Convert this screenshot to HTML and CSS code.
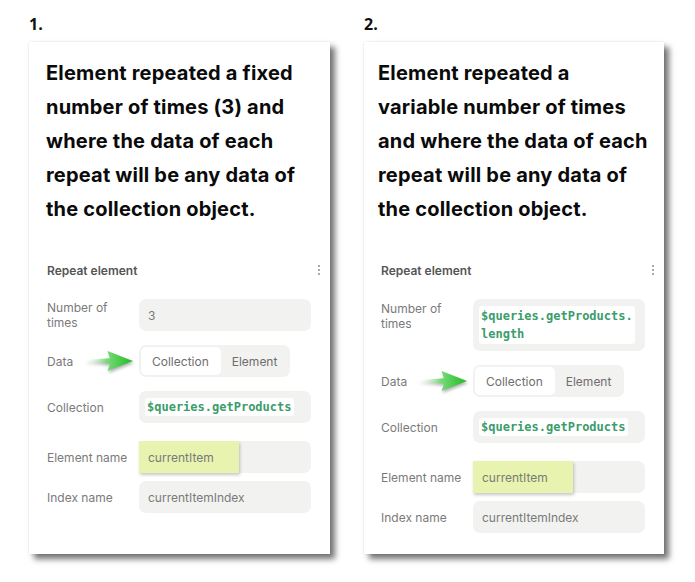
FILE: index.html
```html
<!DOCTYPE html>
<html>
<head>
<meta charset="utf-8">
<link rel="stylesheet" href="styles.css">
</head>
<body>
<div class="page">
  <section class="col">
    <div class="num">1.</div>
    <div class="card">
      <p class="heading">Element repeated a fixed<br>number of times (3) and<br>where the data of each<br>repeat will be any data of<br>the collection object.</p>
      <div class="panel">
        <div class="panel-head"><span>Repeat element</span><span class="kebab"><i></i><i></i><i></i></span></div>
        <div class="row"><div class="label">Number of<br>times</div><div class="field">3</div></div>
        <div class="row"><div class="label">Data<svg class="arrow" viewBox="0 0 50 22" width="50" height="22"><defs><linearGradient id="g1" x1="0" x2="1" y1="0" y2="0"><stop offset="0" stop-color="#ffffff" stop-opacity="0.2"/><stop offset="0.45" stop-color="#7ad97a"/><stop offset="1" stop-color="#1ebd1e"/></linearGradient></defs><path d="M0 10 L25 8.2 L22.5 1 L48 11 L22.5 21 L25 13.8 L0 12 Z" fill="url(#g1)"/></svg></div>
          <div class="toggle"><span class="seg on">Collection</span><span class="seg">Element</span></div></div>
        <div class="row"><div class="label">Collection</div><div class="field"><code class="chip">$queries.getProducts</code></div></div>
        <div class="row gap-lg"><div class="label">Element name</div><div class="field hl-wrap"><span class="hl">currentItem</span></div></div>
        <div class="row gap-sm"><div class="label">Index name</div><div class="field">currentItemIndex</div></div>
      </div>
    </div>
  </section>
  <section class="col">
    <div class="num">2.</div>
    <div class="card alt">
      <p class="heading">Element repeated a<br>variable number of times<br>and where the data of each<br>repeat will be any data of<br>the collection object.</p>
      <div class="panel">
        <div class="panel-head"><span>Repeat element</span><span class="kebab"><i></i><i></i><i></i></span></div>
        <div class="row"><div class="label top">Number of<br>times</div><div class="field tall"><code class="chip">$queries.getProducts.<br>length</code></div></div>
        <div class="row"><div class="label">Data<svg class="arrow" viewBox="0 0 50 22" width="50" height="22"><defs><linearGradient id="g2" x1="0" x2="1" y1="0" y2="0"><stop offset="0" stop-color="#ffffff" stop-opacity="0.2"/><stop offset="0.45" stop-color="#7ad97a"/><stop offset="1" stop-color="#1ebd1e"/></linearGradient></defs><path d="M0 10 L25 8.2 L22.5 1 L48 11 L22.5 21 L25 13.8 L0 12 Z" fill="url(#g2)"/></svg></div>
          <div class="toggle"><span class="seg on">Collection</span><span class="seg">Element</span></div></div>
        <div class="row"><div class="label">Collection</div><div class="field"><code class="chip">$queries.getProducts</code></div></div>
        <div class="row gap-lg"><div class="label">Element name</div><div class="field hl-wrap"><span class="hl">currentItem</span></div></div>
        <div class="row gap-sm"><div class="label">Index name</div><div class="field">currentItemIndex</div></div>
      </div>
    </div>
  </section>
</div>
</body>
</html>
```
FILE: styles.css
```css
html, body {
  margin: 0;
  background: #ffffff;
}
body {
  font-family: Inter, "Liberation Sans", sans-serif;
  color: #222;
  min-height: 582px;
}
.page {
  display: flex;
  align-items: flex-start;
  gap: 34px;
  padding: 0 0 28px 29px;
}
.col {
  display: flex;
  flex-direction: column;
  align-items: flex-start;
  flex: none;
}
.num {
  font: 700 16px/22px "Open Sans", sans-serif;
  color: #111;
  margin: 13px 0 7px;
}
.card {
  width: 301px;
  box-sizing: border-box;
  background: #fff;
  padding: 14px 19px 41px 18px;
  box-shadow: 5px 5px 6px rgba(0, 0, 0, 0.55), 0 0 2px rgba(0, 0, 0, 0.12);
}
.card.alt {
  width: 300px;
  padding-left: 17px;
  padding-bottom: 21px;
}
.heading {
  margin: 0 0 0 -1px;
  font: 700 20px/34px Inter, sans-serif;
  color: #0a0a0a;
  white-space: nowrap;
  letter-spacing: 0.2px;
}
.card.alt .heading {
  margin-left: -3px;
}
.panel {
  margin-top: 36px;
  display: flex;
  flex-direction: column;
}
.panel-head {
  display: flex;
  justify-content: space-between;
  align-items: center;
  height: 16px;
  margin-right: -9px;
  font-size: 12px;
  font-weight: 600;
  color: #555;
  margin-bottom: 21px;
}
.kebab {
  display: flex;
  flex-direction: column;
  gap: 2px;
  width: 2px;
}
.kebab i {
  display: block;
  width: 2px;
  height: 2px;
  background: #aaa;
}
.row {
  display: flex;
  align-items: center;
  margin-top: 14px;
}
.panel-head + .row {
  margin-top: 0;
}
.row.gap-lg { margin-top: 18px; }
.row.gap-sm { margin-top: 8px; }
.label {
  position: relative;
  width: 92px;
  flex: none;
  font-size: 12px;
  line-height: 15px;
  color: #7a7a7a;
}
.label.top {
  align-self: flex-start;
  margin-top: 2px;
}
.arrow {
  position: absolute;
  left: 38px;
  top: -4px;
  filter: drop-shadow(1px 2px 1.5px rgba(0, 0, 0, 0.3));
}
.field {
  width: 172px;
  height: 32px;
  box-sizing: border-box;
  border-radius: 7px;
  background: #f2f2f0;
  padding: 0 9px;
  display: flex;
  align-items: center;
  font-size: 12px;
  color: #7a7a7a;
}
.field.tall {
  height: 52px;
  padding: 0 6px;
}
.chip {
  background: #fff;
  border-radius: 3px;
  padding: 0 2px;
  margin-left: -3px;
  font: 700 12px/18px "DejaVu Sans Mono", monospace;
  color: #3b9c6c;
  white-space: nowrap;
}
.field.tall .chip {
  margin-left: 0;
  padding: 1px 2px;
}
.hl-wrap {
  padding: 0;
}
.hl {
  display: flex;
  align-items: center;
  height: 32px;
  width: 100px;
  box-sizing: border-box;
  padding-left: 9px;
  background: #e7f3ae;
  box-shadow: 1px 2px 3px rgba(0, 0, 0, 0.22);
}
.toggle {
  display: flex;
  height: 32px;
  box-sizing: border-box;
  padding: 2px;
  border-radius: 7px;
  background: #f2f2f0;
}
.seg {
  display: flex;
  align-items: center;
  padding: 0 11px;
  border-radius: 5px;
  font-size: 12px;
  color: #6e6e6e;
}
.seg.on {
  background: #fff;
  padding: 0 12px 0 11px;
}
```
